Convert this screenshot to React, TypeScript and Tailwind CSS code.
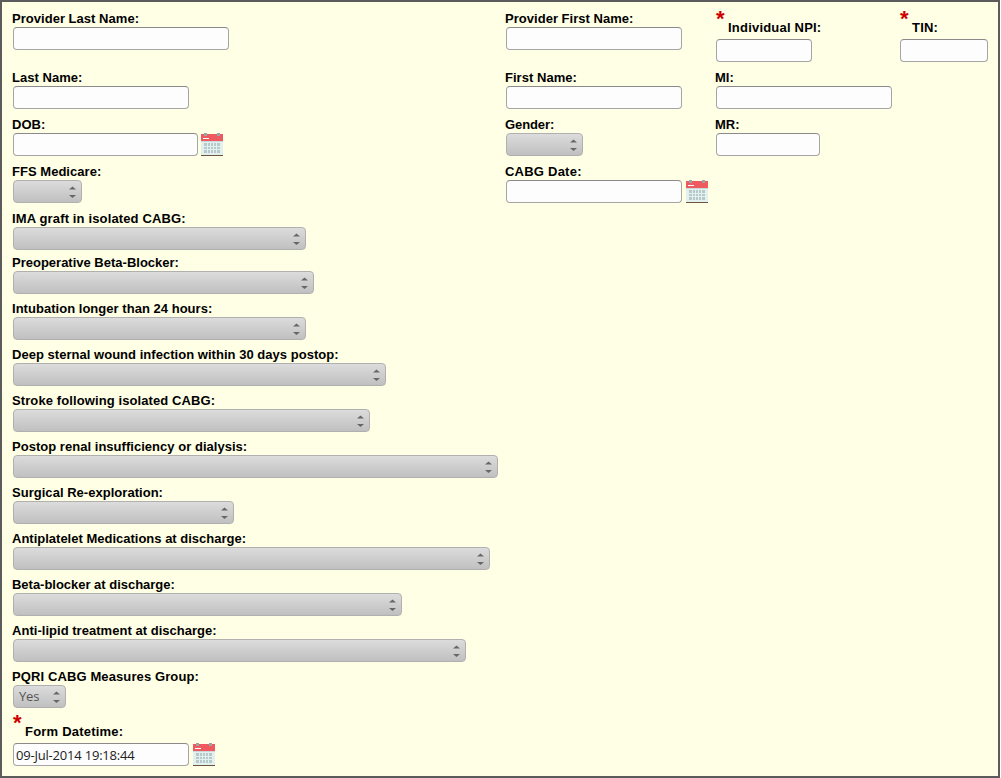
import type { ReactNode } from 'react'

const Calendar = () => (
  <svg width="22" height="23" viewBox="0 0 22 23" className="shrink-0">
    <rect x="0" y="8" width="22" height="14" fill="#e2f0f0" />
    <rect x="0" y="22" width="22" height="1" fill="#6b5540" />
    <rect x="0" y="1" width="22" height="8" fill="#ef5a60" />
    <rect x="0" y="8" width="22" height="1" fill="#c9d8d8" />
    <rect x="2" y="5" width="6" height="1" fill="#fff" />
    <rect x="3" y="0" width="3" height="3" fill="#9aa5a5" />
    <rect x="16" y="0" width="3" height="3" fill="#9aa5a5" />
    <rect x="3" y="10" width="16" height="10" fill="#b7c9c9" />
    <path d="M6.5 10v10M9.5 10v10M12.5 10v10M15.5 10v10M3 13.5h16M3 16.5h16" stroke="#e2f0f0" strokeWidth="1" fill="none" />
  </svg>
)

const Label = ({ children, tracking = 'tracking-[0.03px]' }: { children: ReactNode; tracking?: string }) => (
  <label className={`block text-[13px] leading-[15px] font-bold text-black mb-[1px] ${tracking}`}>{children}</label>
)

// label with the red required star in front of it
const RequiredLabel = ({ children }: { children: ReactNode }) => (
  <div className="flex items-end h-[24px] mb-[4px]">
    <span className="self-start -mt-[3px] ml-[1px] text-[#cc0000] text-[22px] leading-none font-bold">*</span>
    <label className="block pl-[3.5px] text-[13px] leading-[15px] font-bold text-black tracking-[0.2px]">{children}</label>
  </div>
)

const TextBox = ({ w, value }: { w: number; value?: string }) => (
  <input
    readOnly
    value={value ?? ''}
    style={{ width: w }}
    className="block ml-[1px] h-[23px] rounded-[4px] border border-[#a5a5a5] border-t-[#8a8a8a] bg-[#fdfdfd] px-[2px] text-[13px] tracking-[-0.2px] text-[#222] font-['Open_Sans',sans-serif] outline-none"
  />
)

const SelectBox = ({ w, value }: { w: number; value?: string }) => (
  <div style={{ width: w }} className="relative ml-[1px] h-[23px] rounded-[4px] border border-[#b0b0b0] bg-gradient-to-b from-[#dcdcdc] to-[#c0c0c0] px-[5px] text-[13px] tracking-[-0.2px] leading-[21px] text-[#555] font-['Open_Sans',sans-serif]">
    {value}
    <svg width="7" height="13" viewBox="0 0 7 13" className="absolute right-[5px] top-[5px]">
      <path d="M3.5 0.5 7 3.5H0Z" fill="#666" />
      <path d="M0 9h7L3.5 12Z" fill="#666" />
    </svg>
  </div>
)

const selects: [string, number, number, string?][] = [
  ['IMA graft in isolated CABG:', 293, 44, 'tracking-[0.14px]'],
  ['Preoperative Beta-Blocker:', 301, 46, 'tracking-[0px]'],
  ['Intubation longer than 24 hours:', 293, 46],
  ['Deep sternal wound infection within 30 days postop:', 373, 46],
  ['Stroke following isolated CABG:', 357, 46, 'tracking-[0.1px]'],
  ['Postop renal insufficiency or dialysis:', 485, 46],
  ['Surgical Re-exploration:', 221, 46],
  ['Antiplatelet Medications at discharge:', 477, 46, 'tracking-[0px]'],
  ['Beta-blocker at discharge:', 389, 46, 'tracking-[-0.02px]'],
  ['Anti-lipid treatment at discharge:', 453, 46],
]

export default function App() {
  return (
    <div className="w-[1001px] h-[778px] bg-white overflow-hidden font-['Liberation_Sans',sans-serif]">
      <div className="h-[778px] w-[1000px] border-2 border-[#5c5c5c] bg-[#ffffe5] pl-[10px] pt-[9px]">
        <div className="grid grid-cols-[493px_210px_184px_1fr] grid-rows-[59px_47px_47px_47px]">
          <div>
            <Label>Provider Last Name:</Label>
            <TextBox w={216} />
          </div>
          <div>
            <Label>Provider First Name:</Label>
            <TextBox w={176} />
          </div>
          <div>
            <RequiredLabel>Individual NPI:</RequiredLabel>
            <TextBox w={96} />
          </div>
          <div>
            <RequiredLabel>TIN:</RequiredLabel>
            <TextBox w={88} />
          </div>

          <div>
            <Label>Last Name:</Label>
            <TextBox w={176} />
          </div>
          <div>
            <Label>First Name:</Label>
            <TextBox w={176} />
          </div>
          <div className="col-span-2">
            <Label>MI:</Label>
            <TextBox w={176} />
          </div>

          <div>
            <Label>DOB:</Label>
            <div className="flex items-start gap-[3px]">
              <TextBox w={185} />
              <Calendar />
            </div>
          </div>
          <div>
            <Label tracking="tracking-[-0.1px]">Gender:</Label>
            <SelectBox w={77} />
          </div>
          <div className="col-span-2">
            <Label>MR:</Label>
            <TextBox w={104} />
          </div>

          <div>
            <Label>FFS Medicare:</Label>
            <SelectBox w={69} />
          </div>
          <div className="col-span-3">
            <Label tracking="tracking-[0.23px]">CABG Date:</Label>
            <div className="flex items-start gap-[4px]">
              <TextBox w={176} />
              <Calendar />
            </div>
          </div>
        </div>

        {selects.map(([label, w, h, tracking]) => (
          <div key={label} style={{ height: h }}>
            <Label tracking={tracking}>{label}</Label>
            <SelectBox w={w} />
          </div>
        ))}

        <div className="h-[46px]">
          <Label tracking="tracking-[0.11px]">PQRI CABG Measures Group:</Label>
          <SelectBox w={53} value="Yes" />
        </div>

        <RequiredLabel>Form Datetime:</RequiredLabel>
        <div className="flex items-start gap-[4px]">
          <TextBox w={176} value="09-Jul-2014 19:18:44" />
          <Calendar />
        </div>
      </div>
    </div>
  )
}
